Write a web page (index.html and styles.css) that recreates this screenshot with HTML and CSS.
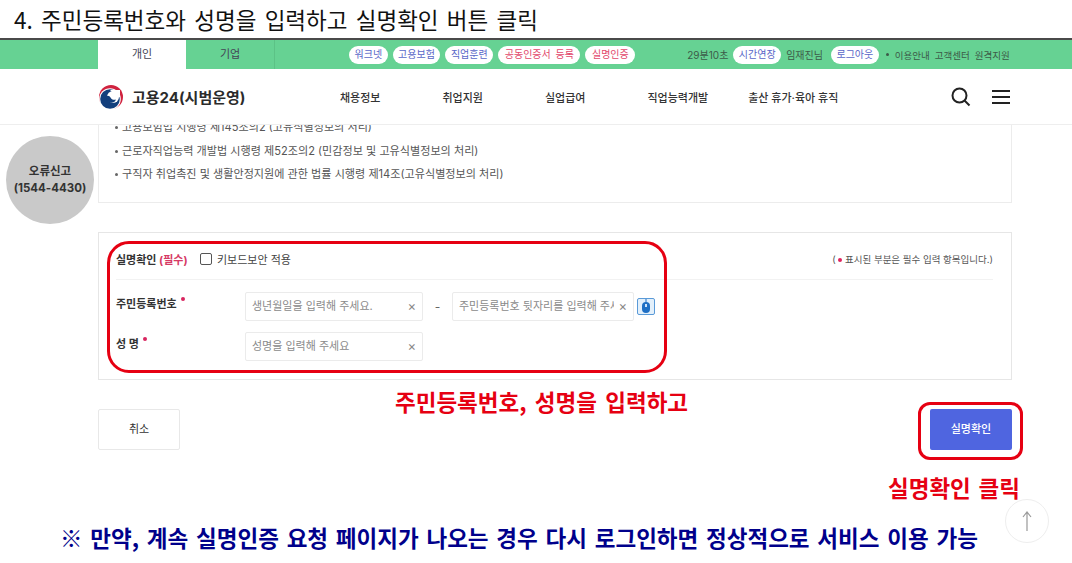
FILE: index.html
```html
<!DOCTYPE html>
<html lang="ko">
<head>
    <meta charset="UTF-8">
    <title>실명확인</title>
    <link rel="stylesheet" href="styles.css">
</head>
<body>
    <div class="slide">
        <h1 class="slide-title">4. 주민등록번호와 성명을 입력하고 실명확인 버튼 클릭</h1>

        <div class="topbar">
            <div class="tabs">
                <a class="tab active">개인</a>
                <a class="tab">기업</a>
            </div>
            <div class="pills">
                <a class="pill blue">워크넷</a>
                <a class="pill blue">고용보험</a>
                <a class="pill blue">직업훈련</a>
                <a class="pill red">공동인증서 등록</a>
                <a class="pill red">실명인증</a>
            </div>
            <div class="util">
                <span class="timer">29분10초</span>
                <a class="pill blue">시간연장</a>
                <span class="user">임재진님</span>
                <a class="pill blue logout">로그아웃</a>
                <span class="dot"></span>
                <span class="util-link">이용안내</span>
                <span class="util-link">고객센터</span>
                <span class="util-link">원격지원</span>
            </div>
        </div>

        <header class="nav">
            <div class="logo">
                <svg width="26" height="26" viewBox="0 0 26 26">
                    <circle cx="13" cy="13" r="12" fill="#d0233f"/>
                    <circle cx="12" cy="15" r="10.800" fill="#fff"/>
                    <circle cx="12" cy="15" r="9.800" fill="#123e7c"/>
                    <circle cx="15" cy="13" r="6" fill="#fff"/>
                    <path d="M12 6H22V13H19z" fill="#fff"/>
                    <path d="M8 12.500c2-1.500 3.500-.5 4.500 1 1 1.800 3 3 5.500 2-1 2.500-3 3.500-5.500 3.200C9.500 18.300 7.500 15.500 8 12.500z" fill="#123e7c"/>
                </svg>
                <span class="logo-text">고용24(시범운영)</span>
            </div>
            <nav class="menu">
                <a class="menu-item m1">채용정보</a>
                <a class="menu-item m2">취업지원</a>
                <a class="menu-item m3">실업급여</a>
                <a class="menu-item m4">직업능력개발</a>
                <a class="menu-item m5">출산 휴가·육아 휴직</a>
            </nav>
            <div class="nav-icons">
                <svg width="20" height="20" viewBox="0 0 20 20" fill="none" stroke="#222" stroke-width="2">
                    <circle cx="8.500" cy="8.500" r="7"/>
                    <path d="M13.500 13.500L18.500 18.500"/>
                </svg>
                <svg width="18" height="16" viewBox="0 0 18 16" fill="none" stroke="#222" stroke-width="2">
                    <path d="M0 2H18M0 8H18M0 14H18"/>
                </svg>
            </div>
        </header>

        <main class="content">
            <section class="law-box">
                <ul class="law-list">
                    <li>고용보험법 시행령 제145조의2 (고유식별정보의 처리)</li>
                    <li>근로자직업능력 개발법 시행령 제52조의2 (민감정보 및 고유식별정보의 처리)</li>
                    <li>구직자 취업촉진 및 생활안정지원에 관한 법률 시행령 제14조(고유식별정보의 처리)</li>
                </ul>
            </section>

            <section class="form-box">
                <div class="form-head">
                    <div class="form-head-left">
                        <strong class="form-title">실명확인 <em>(필수)</em></strong>
                        <label class="check"><span class="checkbox"></span>키보드보안 적용</label>
                    </div>
                    <p class="req-note">( <i class="req-dot"></i> 표시된 부분은 필수 입력 항목입니다.)</p>
                </div>
                <div class="form-row first">
                    <span class="field-label">주민등록번호<i class="req-mark"></i></span>
                    <div class="input"><input class="ph" placeholder="생년월일을 입력해 주세요."><span class="clear">×</span></div>
                    <span class="dash">-</span>
                    <div class="input narrow"><input class="ph" placeholder="주민등록번호 뒷자리를 입력해 주세요"><span class="clear">×</span></div>
                    <span class="mouse-btn">
                        <svg width="10" height="15" viewBox="0 0 10 15">
                            <path d="M5 0V4" stroke="#1f6fc4" stroke-width="1"/>
                            <rect x="1" y="3" width="8" height="11" rx="4" fill="#1f6fc4"/>
                            <rect x="4" y="5" width="2" height="3" fill="#cfe4fa"/>
                        </svg>
                    </span>
                </div>
                <div class="form-row">
                    <span class="field-label">성 명<i class="req-mark"></i></span>
                    <div class="input"><input class="ph" placeholder="성명을 입력해 주세요"><span class="clear">×</span></div>
                </div>
            </section>

            <div class="actions">
                <a class="btn">취소</a>
                <a class="btn primary">실명확인</a>
            </div>
        </main>

        <aside class="report">오류신고<br>(1544-4430)</aside>
        <div class="mark mark-form"></div>
        <div class="mark mark-btn"></div>
        <p class="note note-form">주민등록번호, 성명을 입력하고</p>
        <p class="note note-btn">실명확인 클릭</p>
        <p class="note note-bottom">※ 만약, 계속 실명인증 요청 페이지가 나오는 경우 다시 로그인하면 정상적으로 서비스 이용 가능</p>
        <a class="to-top">
            <svg width="10" height="20" viewBox="0 0 10 20" fill="none" stroke="#999" stroke-width="1.200">
                <path d="M5 20V1M1 6L5 1L9 6"/>
            </svg>
        </a>
    </div>
</body>
</html>
```

FILE: styles.css
```css
* {
    box-sizing: border-box;
}

html, body {
    margin: 0;
    padding: 0;
}

body {
    background: #fff;
    color: #333;
    font-family: "Inter", "Noto Sans CJK KR", "Noto Sans", sans-serif;
    overflow: hidden;
}

.slide {
    position: relative;
    width: 1072px;
    height: 563px;
    overflow: hidden;
}

.slide-title {
    margin: 0;
    height: 40px;
    padding: 3px 0 0 14px;
    border-bottom: 2px solid #4a4a4a;
    color: #111;
    font-family: "Noto Sans CJK KR", sans-serif;
    font-size: 22.500px;
    font-weight: 400;
    line-height: 33px;
    word-spacing: 2px;
}

/* green bar */
.topbar {
    display: flex;
    align-items: center;
    height: 29px;
    padding-left: 98px;
    background: #66d293;
    font-size: 10px;
    color: #3c5a48;
}

.tabs {
    display: flex;
    align-self: stretch;
    width: 177px;
    border-right: 1px solid #5cc286;
}

.tab {
    width: 88px;
    line-height: 29px;
    text-align: center;
    font-size: 11px;
    color: #445;
}

.tab.active {
    background: #fff;
}

.pills {
    display: flex;
    gap: 5px;
    margin-left: 74px;
}

.pill {
    display: block;
    height: 18px;
    padding: 0 5.500px;
    border-radius: 9px;
    background: #fff;
    font-size: 10px;
    line-height: 17px;
    white-space: nowrap;
}

.pill.blue {
    color: #5a67c8;
}

.pill.red {
    padding: 0 6.500px;
    color: #e2476b;
    word-spacing: 2px;
}

.util {
    display: flex;
    align-items: center;
    margin-left: 52px;
    white-space: nowrap;
}

.util .pill {
    margin-left: 5px;
}

.user {
    margin-left: 5px;
}

.util .pill.logout {
    margin-left: 8px;
}

.dot {
    width: 3px;
    height: 3px;
    margin: 0 6px 0 7px;
    border-radius: 50%;
    background: #3c5a48;
}

.util-link {
    margin-right: 5px;
    font-size: 9.500px;
}

/* main nav */
.nav {
    display: flex;
    align-items: center;
    height: 56px;
    padding-left: 98px;
    border-bottom: 1px solid #eee;
    background: #fff;
}

.logo {
    display: flex;
    align-items: center;
    gap: 8px;
    width: 242px;
}

.logo-text {
    color: #2b2b2b;
    font-size: 15px;
    font-weight: 700;
    white-space: nowrap;
}

.menu {
    display: flex;
    width: 500px;
}

.menu-item {
    font-size: 11px;
    font-weight: 500;
    color: #333;
    white-space: nowrap;
}

.m2 { margin-left: 62px; }
.m3 { margin-left: 62px; }
.m4 { margin-left: 62px; }
.m5 { margin-left: 40px; }

.nav-icons {
    display: flex;
    align-items: center;
    gap: 21px;
    margin-left: 111px;
}

/* page content */
.content {
    height: 438px;
    padding: 0 60px 0 98px;
    overflow: hidden;
}

.law-box {
    display: flow-root;
    height: 78px;
    padding-left: 16px;
    border: 1px solid #ececec;
    border-top: 0;
}

.law-list {
    margin: -9px 0 0;
    padding: 0;
    list-style: none;
    font-size: 11.100px;
    line-height: 23.500px;
    color: #555;
}

.law-list li::before {
    content: "";
    display: inline-block;
    width: 3px;
    height: 3px;
    margin-right: 4px;
    border-radius: 50%;
    background: #666;
    vertical-align: middle;
}

.form-box {
    height: 148px;
    margin-top: 29px;
    padding: 0 18px 0 17px;
    border: 1px solid #e6e6e6;
}

.form-head {
    display: flex;
    align-items: center;
    justify-content: space-between;
    height: 47px;
    padding-top: 6px;
    border-bottom: 1px solid #f2f2f2;
}

.form-head-left {
    display: flex;
    align-items: center;
}

.form-title {
    width: 84px;
    font-size: 11px;
    font-weight: 700;
    color: #333;
    white-space: nowrap;
}

.form-title em {
    color: #d63a65;
    font-style: normal;
}

.check {
    display: flex;
    align-items: center;
    font-size: 11px;
    color: #444;
}

.checkbox {
    width: 12px;
    height: 12px;
    margin-right: 5px;
    border: 1px solid #555;
    border-radius: 2px;
}

.req-note {
    margin: 0;
    font-size: 9.500px;
    color: #555;
}

.req-dot {
    display: inline-block;
    width: 4px;
    height: 4px;
    border-radius: 50%;
    background: #e0245e;
    vertical-align: middle;
}

.form-row {
    display: flex;
    align-items: center;
    height: 30px;
    margin-top: 10px;
}

.form-row.first {
    margin-top: 11px;
}

.field-label {
    width: 129px;
    margin-top: -4px;
    font-size: 11px;
    font-weight: 700;
    color: #333;
}

.req-mark {
    display: inline-block;
    width: 4px;
    height: 4px;
    margin: 0 0 12px 4px;
    border-radius: 50%;
    background: #d8255f;
    vertical-align: middle;
}

.input {
    display: flex;
    align-items: center;
    justify-content: space-between;
    width: 178px;
    height: 29px;
    padding: 0 6px;
    border: 1px solid #ebebeb;
    border-radius: 2px;
    background: #fff;
}

.input.narrow {
    width: 182px;
}

.ph {
    width: 155px;
    padding: 0;
    border: 0;
    outline: 0;
    background: none;
    font-family: inherit;
    font-size: 11px;
}

.ph::placeholder {
    color: #8a8a8a;
    opacity: 1;
}

.clear {
    font-size: 13px;
    line-height: 1;
    color: #888;
}

.dash {
    width: 29px;
    text-align: center;
    font-size: 12px;
    color: #666;
}

.mouse-btn {
    display: flex;
    align-items: center;
    justify-content: center;
    width: 18px;
    height: 17px;
    margin-left: 3px;
    border: 1px solid #5a9ad8;
    border-radius: 2px;
    background: #e3f0fb;
}

.actions {
    display: flex;
    justify-content: space-between;
    margin-top: 29px;
}

.btn {
    width: 82px;
    height: 41px;
    border: 1px solid #e8e8e8;
    border-radius: 2px;
    font-size: 11px;
    line-height: 38px;
    text-align: center;
    color: #333;
}

.btn.primary {
    border: 0;
    background: #4f65e0;
    line-height: 41px;
    color: #fff;
    font-weight: 500;
}

/* things that lie over the page */
.report {
    position: absolute;
    left: 6px;
    top: 136px;
    width: 88px;
    height: 88px;
    padding-top: 27px;
    border-radius: 50%;
    background: #c9c9c9;
    text-align: center;
    font-size: 11.500px;
    font-weight: 700;
    line-height: 16.500px;
    color: #333;
}

.mark {
    position: absolute;
    border: 3px solid #e60012;
}

.mark-form {
    left: 107px;
    top: 241px;
    width: 560px;
    height: 132px;
    border-radius: 22px;
}

.mark-btn {
    left: 918px;
    top: 402px;
    width: 105px;
    height: 58px;
    border-radius: 12px;
}

.note {
    position: absolute;
    margin: 0;
    font-family: "Noto Sans CJK KR", sans-serif;
    font-weight: 700;
    white-space: nowrap;
}

.note-form {
    left: 395px;
    top: 385px;
    font-size: 22.500px;
    line-height: 33px;
    color: #e60012;
    word-spacing: 2px;
}

.note-btn {
    left: 888px;
    top: 471px;
    font-size: 22.500px;
    line-height: 33px;
    color: #e60012;
    word-spacing: 1.500px;
}

.note-bottom {
    left: 60px;
    top: 521px;
    font-size: 22.500px;
    line-height: 32px;
    color: #00008b;
    word-spacing: 1.500px;
}

.to-top {
    position: absolute;
    left: 1005px;
    top: 499px;
    display: flex;
    align-items: center;
    justify-content: center;
    width: 44px;
    height: 44px;
    border: 1px solid #eee;
    border-radius: 50%;
    background: #fff;
}
```
